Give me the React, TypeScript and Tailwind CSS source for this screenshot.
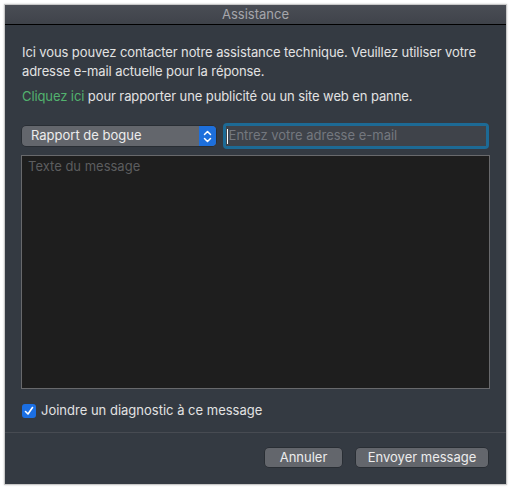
import React from 'react'

const App = () => {
  return (
    <div className="w-[512px] h-[490px] bg-white pt-[4px] pl-[4px] pr-[4px] pb-[4px] font-['Inter',sans-serif]">
      <div className="w-[503px] h-[481px] flex flex-col bg-[#343a42] border border-[#c8c8c8] shadow-[0_0_2px_rgba(0,0,0,0.2)]">
        <div className="h-[20px] flex items-center justify-center bg-gradient-to-b from-[#4a4d55] to-[#3f434a] border-b border-black text-[13px] text-[#a5a6ab]">
          Assistance
        </div>
        <div className="flex-1 flex flex-col px-[17px] pt-[18px]">
          <p className="text-[13px] leading-[19px] text-[#e2e2e2] tracking-[-0.1px]">
            Ici vous pouvez contacter notre assistance technique. Veuillez utiliser votre adresse e-mail actuelle pour la réponse.
          </p>
          <p className="mt-[6px] text-[13px] leading-[19px] text-[#e2e2e2] tracking-[-0.1px]">
            <span className="text-[#52b26e]">Cliquez ici</span> pour rapporter une publicité ou un site web en panne.
          </p>
          <div className="mt-[17px] flex items-center gap-[7px]">
            <div className="w-[194px] h-[20px] flex items-center rounded-[4px] bg-[#63666c] shadow-[0_0_0_0.5px_rgba(0,0,0,0.4)] overflow-hidden">
              <span className="flex-1 pl-[9px] text-[13px] text-[#ececec]">Rapport de bogue</span>
              <div className="w-[17px] h-full bg-[#1d6fdc] flex items-center justify-center">
                <svg width="9" height="13" viewBox="0 0 9 13" fill="none" stroke="white" strokeWidth="1.5" strokeLinecap="round" strokeLinejoin="round">
                  <path d="M1.5 4.5 L4.5 1.5 L7.5 4.5" />
                  <path d="M1.5 8.5 L4.5 11.5 L7.5 8.5" />
                </svg>
              </div>
            </div>
            <div className="w-[267px] h-[26px] rounded-[4px] bg-[#1d6a95] p-[3px]">
              <div className="w-full h-full bg-[#3f434a] flex items-center pl-[1px] text-[13px] text-[#74787f]">
                <span className="w-[1px] h-[15px] bg-white mr-[1px]"></span>
                Entrez votre adresse e-mail
              </div>
            </div>
          </div>
          <div className="mt-[6px] h-[234px] w-[469px] -ml-[1px] bg-[#1e1e1e] border border-[#68696c] px-[6px] pt-[1px] text-[13px] text-[#5c5d5f]">
            Texte du message
          </div>
          <div className="mt-[12px] flex items-center gap-[5px]">
            <div className="w-[14px] h-[14px] rounded-[3px] bg-[#1b6fe3] flex items-center justify-center">
              <svg width="10" height="10" viewBox="0 0 10 10" fill="none" stroke="white" strokeWidth="1.6" strokeLinecap="round" strokeLinejoin="round">
                <path d="M1.5 5.5 L4 8 L8.5 1.5" />
              </svg>
            </div>
            <span className="text-[13px] text-[#e2e2e2]">Joindre un diagnostic à ce message</span>
          </div>
        </div>
        <div className="h-[52px] border-t border-[#474b52] flex items-start justify-end gap-[14px] pt-[15px] pr-[18px]">
          <button className="w-[77px] h-[19px] rounded-[4px] bg-[#63666c] text-[13px] leading-[19px] text-[#ececec] shadow-[0_0_0_0.5px_rgba(0,0,0,0.4)]">
            Annuler
          </button>
          <button className="w-[132px] h-[19px] rounded-[4px] bg-[#63666c] text-[13px] leading-[19px] text-[#ececec] shadow-[0_0_0_0.5px_rgba(0,0,0,0.4)]">
            Envoyer message
          </button>
        </div>
      </div>
    </div>
  )
}

export default App
